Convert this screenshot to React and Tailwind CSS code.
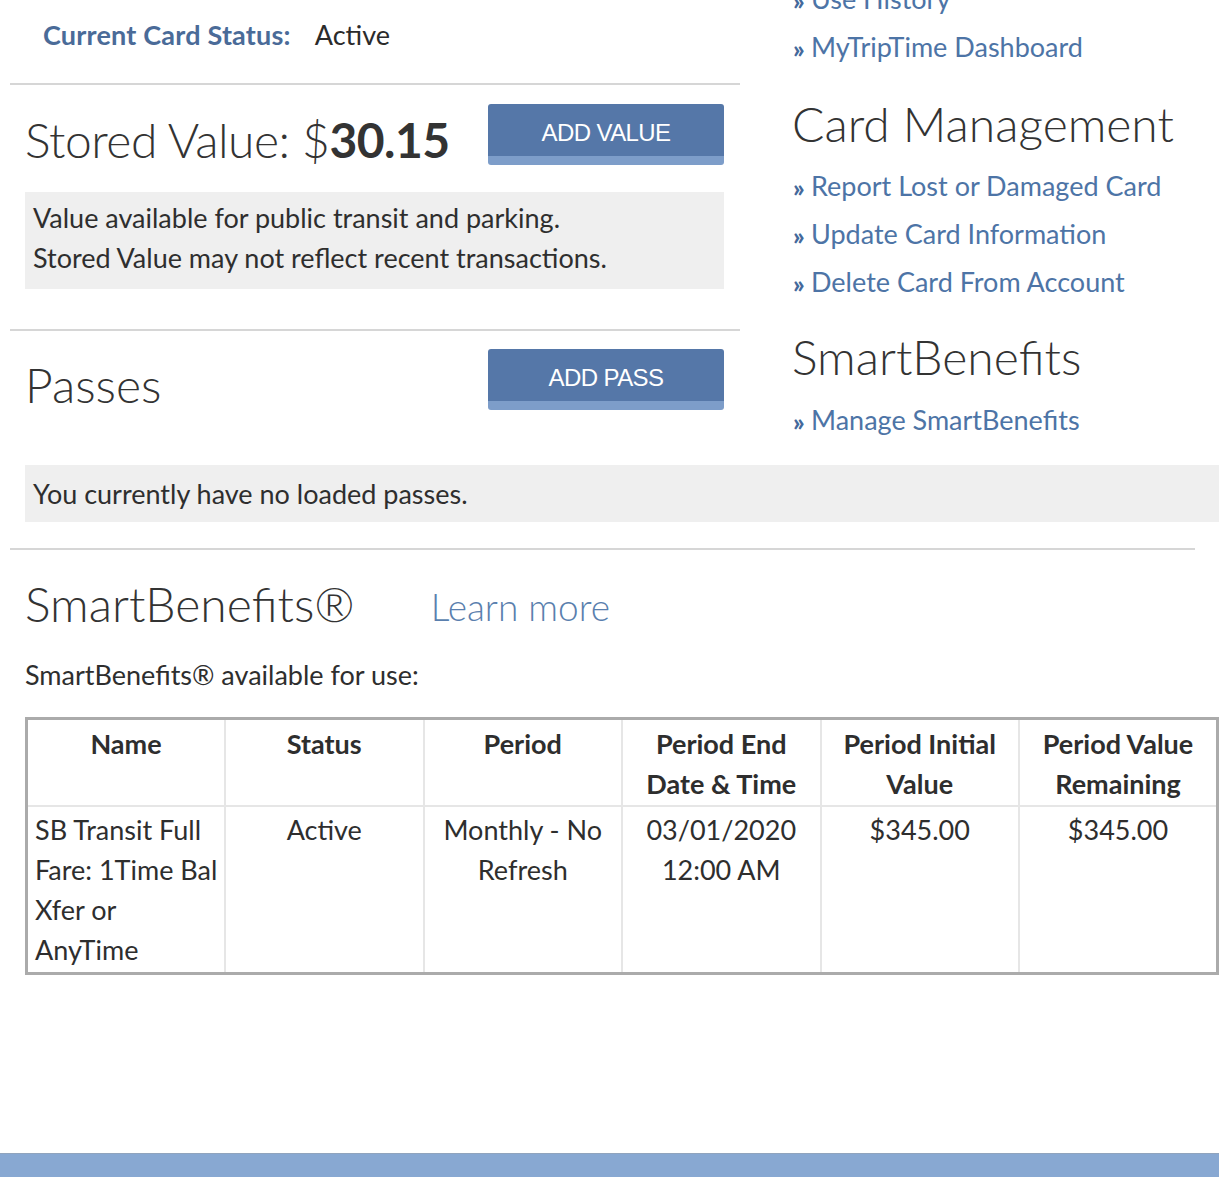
import React from "react";

const linkCls = "flex items-center h-[48px] text-[27px] text-[#4d74a6] leading-none whitespace-nowrap";

function NavLink({ children }) {
    return (
        <a href="#" className={linkCls} onClick={(e) => e.preventDefault()}>
            <span className="w-[18px] text-[25px] font-black mt-[5px] tracking-[-4px] text-[#44699b]">»</span>
            {children}
        </a>
    );
}

function BlueButton({ children }) {
    return (
        <button className="w-[236px] h-[61px] rounded-[3px] bg-[#5577a8] border-b-[9px] border-[#7d9dc9] text-white text-[24px] font-['Liberation_Sans',Arial,sans-serif] tracking-[-0.6px] pt-[6px]">
            {children}
        </button>
    );
}

const headers = [
    ["Name"],
    ["Status"],
    ["Period"],
    ["Period End", "Date & Time"],
    ["Period Initial", "Value"],
    ["Period Value", "Remaining"],
];

export default function App() {
    return (
        <div className="w-[1219px] h-[1177px] overflow-hidden bg-white font-['Lato','Noto_Sans',sans-serif] text-[#333] flex flex-col">
            {/* Top: left card details + right sidebar */}
            <div className="flex h-[465px]">
                <div className="w-[730px] ml-[10px] shrink-0">
                    {/* status */}
                    <div className="h-[83px] flex items-start pt-[15px] pl-[33px] text-[27px]">
                        <span className="font-bold text-[#4a6b98] tracking-[0.2px]">Current Card Status:</span>
                        <span className="ml-[24px] text-[#2b2b2b]">Active</span>
                    </div>
                    <div className="border-t-2 border-[#d6d6d6]" />
                    {/* stored value */}
                    <div className="h-[244px] pl-[15px] pt-[19px]">
                        <div className="flex justify-between items-start pr-[16px]">
                            <h2 className="text-[48px] font-light leading-[56px] mt-[8px] text-[#333] tracking-[-0.5px]">
                                Stored Value: $<span className="font-bold">30.15</span>
                            </h2>
                            <BlueButton>ADD VALUE</BlueButton>
                        </div>
                        <div className="mt-[24px] mr-[16px] h-[97px] bg-[#efefef] pl-[8px] pt-[6px] text-[27px] leading-[40px] text-[#2e2e2e]">
                            <p>Value available for public transit and parking.</p>
                            <p>Stored Value may not reflect recent transactions.</p>
                        </div>
                    </div>
                    <div className="border-t-2 border-[#d6d6d6]" />
                    {/* passes */}
                    <div className="pl-[15px] pt-[18px] pr-[16px] flex justify-between items-start">
                        <h2 className="text-[48px] font-light leading-[56px] mt-[8px] text-[#333]">Passes</h2>
                        <BlueButton>ADD PASS</BlueButton>
                    </div>
                </div>

                {/* sidebar */}
                <div className="ml-[53px] mt-[-26px] text-[#333]">
                    <NavLink>Use History</NavLink>
                    <NavLink>MyTripTime Dashboard</NavLink>
                    <h3 className="text-[48px] font-light leading-[56px] mt-[26px] mb-[9px] ml-[-1px]">Card Management</h3>
                    <NavLink>Report Lost or Damaged Card</NavLink>
                    <NavLink>Update Card Information</NavLink>
                    <NavLink>Delete Card From Account</NavLink>
                    <h3 className="text-[48px] font-light leading-[56px] mt-[24px] mb-[10px] ml-[-1px]">SmartBenefits</h3>
                    <NavLink>Manage SmartBenefits</NavLink>
                </div>
            </div>

            {/* no passes */}
            <div className="ml-[25px] h-[57px] bg-[#efefef] pl-[8px] pt-[1px] flex items-center text-[27px] text-[#2e2e2e]">
                You currently have no loaded passes.
            </div>

            <div className="ml-[10px] w-[1185px] mt-[26px] border-t-2 border-[#d6d6d6]" />

            {/* SmartBenefits */}
            <div className="pl-[25px]">
                <div className="flex items-center mt-[25px] h-[58px]">
                    <h2 className="text-[48px] font-light leading-[56px] text-[#333]">SmartBenefits®</h2>
                    <a href="#" className="ml-[76px] mt-[6px] text-[37px] font-light text-[#5a7fae]">Learn more</a>
                </div>
                <p className="mt-[22px] text-[27px] leading-[40px] text-[#2e2e2e]">SmartBenefits® available for use:</p>

                <table className="mt-[22px] w-[1194px] table-fixed border-collapse border-[3px] border-[#ababab] text-[27px] leading-[40px] text-[#2e2e2e]">
                    <thead>
                        <tr>
                            {headers.map((h, i) => (
                                <th key={i} className="border-2 border-[#e6e6e6] align-top font-bold text-center pt-[4px] pb-[1px] px-[4px] h-[85px]">
                                    {h.map((l) => (
                                        <div key={l}>{l}</div>
                                    ))}
                                </th>
                            ))}
                        </tr>
                    </thead>
                    <tbody>
                        <tr>
                            <td className="border-2 border-[#e6e6e6] align-top pl-[7px] pr-[6px] pt-[3px] pb-[2px]">
                                SB Transit Full Fare: 1Time Bal Xfer or AnyTime
                            </td>
                            <td className="border-2 border-[#e6e6e6] align-top text-center pt-[3px]">Active</td>
                            <td className="border-2 border-[#e6e6e6] align-top text-center pt-[3px] px-[14px]">Monthly - No Refresh</td>
                            <td className="border-2 border-[#e6e6e6] align-top text-center pt-[3px]">
                                <div>03/01/2020</div>
                                <div>12:00 AM</div>
                            </td>
                            <td className="border-2 border-[#e6e6e6] align-top text-center pt-[3px]">$345.00</td>
                            <td className="border-2 border-[#e6e6e6] align-top text-center pt-[3px]">$345.00</td>
                        </tr>
                    </tbody>
                </table>
            </div>

            <div className="mt-auto h-[24px] bg-[#88a8d2] border-t border-[#90a4bd]" />
        </div>
    );
}
